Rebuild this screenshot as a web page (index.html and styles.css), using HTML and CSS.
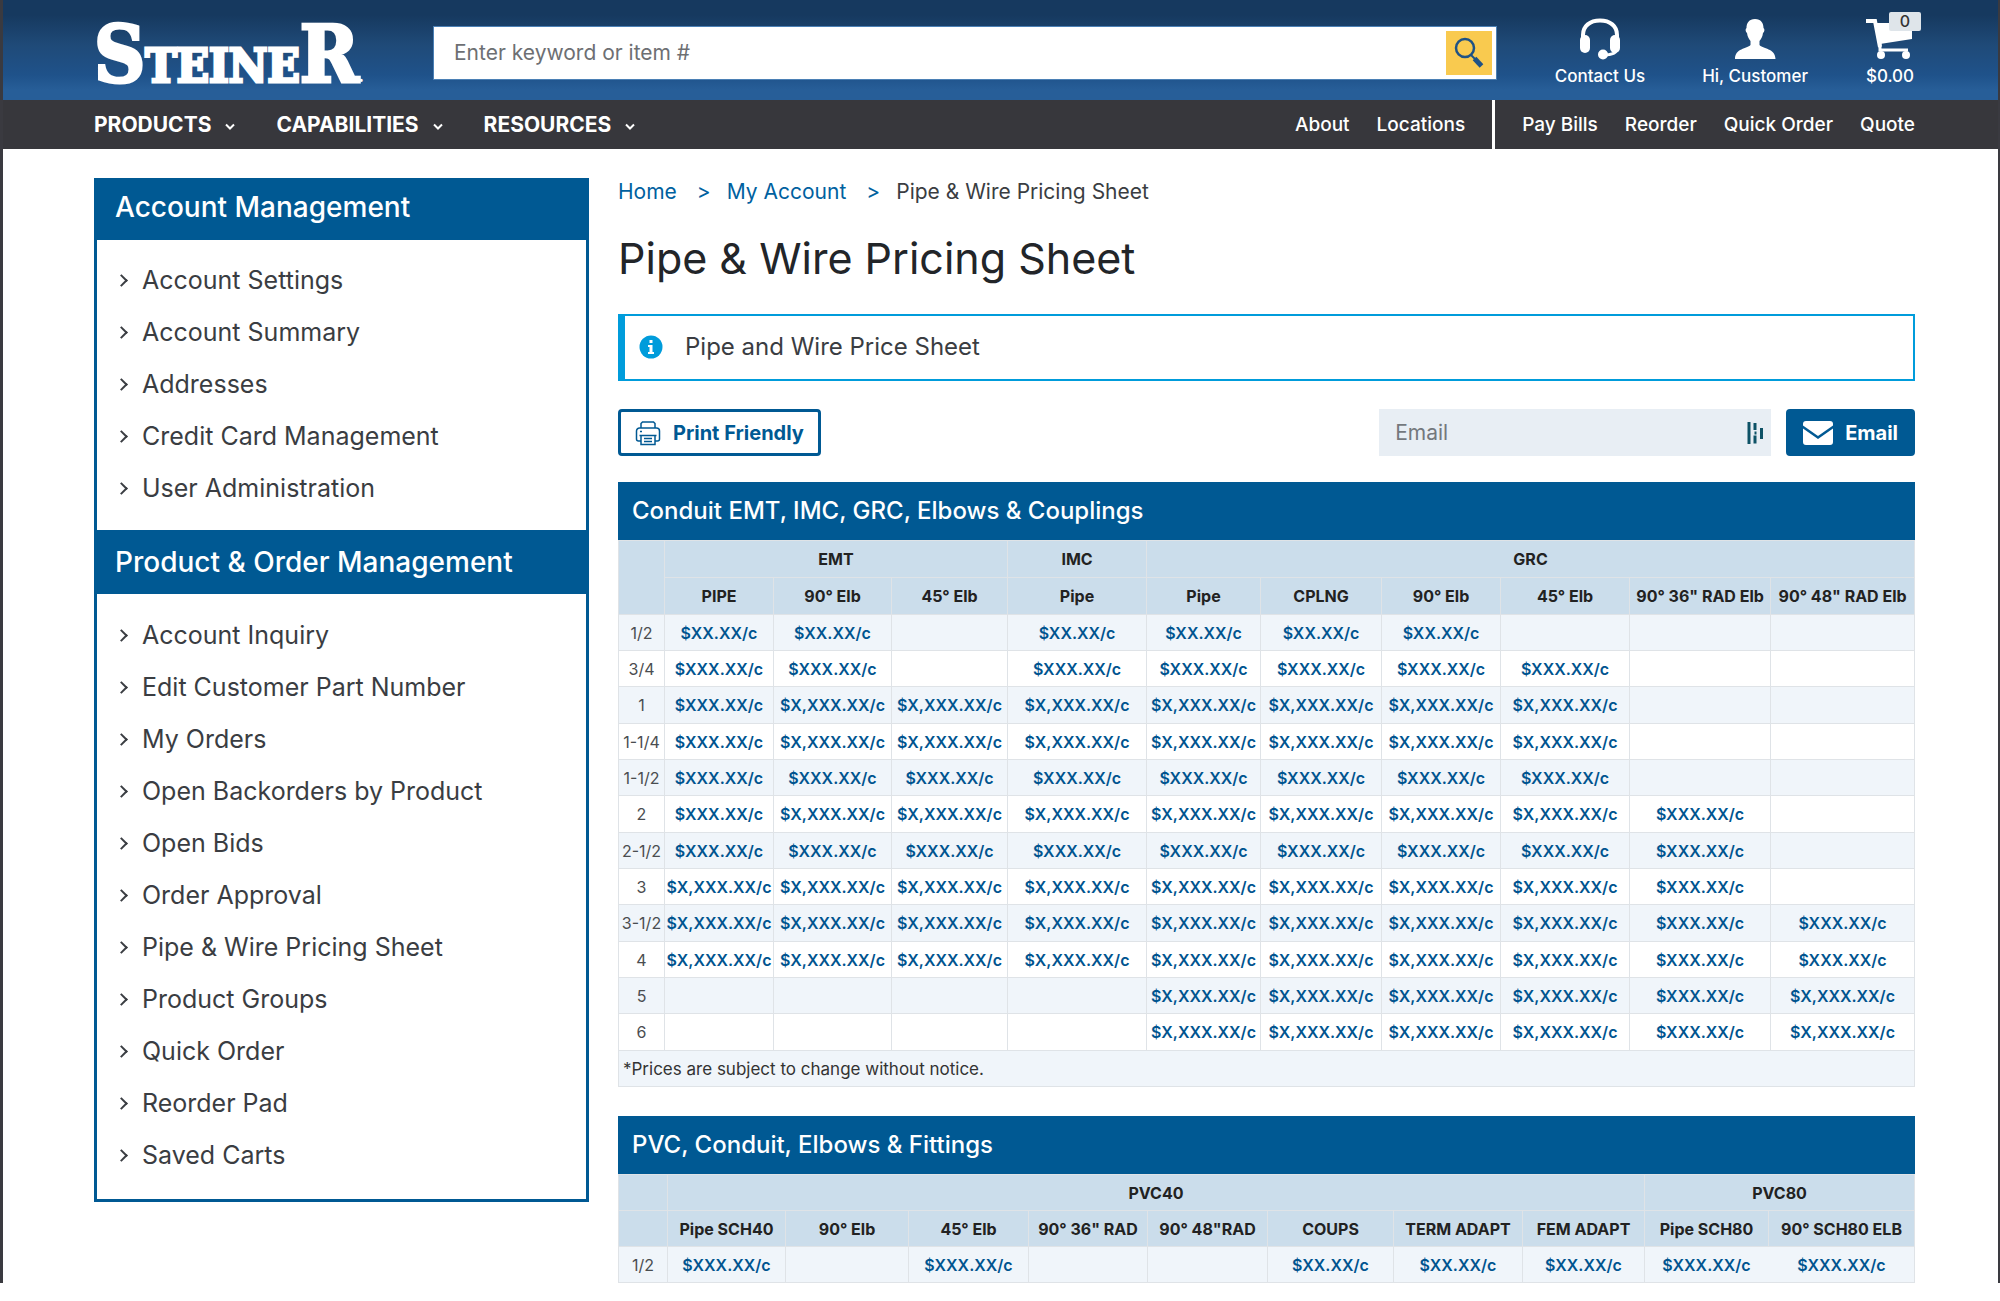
FILE: index.html
```html
<!DOCTYPE html>
<html lang="en">
<head>
<meta charset="utf-8">
<meta name="viewport" content="width=device-width, initial-scale=1">
<title>Pipe &amp; Wire Pricing Sheet</title>
<link rel="stylesheet" href="styles.css">
</head>
<body>
<div class="page">
  <header class="header wrap">
    <a class="logo" href="#" aria-label="Steiner"><span class="logo-cap">S</span>TEINE<span class="logo-cap">R</span><span class="logo-dot">.</span></a>
    <form class="search">
      <input class="search-input" type="text" aria-label="Search" placeholder="Enter keyword or item #">
      <button class="search-button" type="button" aria-label="Search">
        <svg width="30" height="34" viewBox="0 0 30 34" fill="none" stroke="#1f5285"><circle cx="11" cy="12" r="9" stroke-width="2.5"/><path d="M17 19l4 4" stroke-width="2"/><path d="M20.500 22.500l7 7.500" stroke-width="5"/></svg>
      </button>
    </form>
    <nav class="tools" aria-label="Account">
      <a class="tool" href="#">
        <svg width="42" height="42" viewBox="0 0 42 42"><path d="M4 22V17C4 8 11 2.500 21 2.500S38 8 38 17v5" fill="none" stroke="#fff" stroke-width="4"/><rect x="1" y="17" width="10" height="18" rx="5" fill="#fff"/><rect x="31" y="17" width="10" height="18" rx="5" fill="#fff"/><path d="M38 30c0 5-5 7-14 7" fill="none" stroke="#fff" stroke-width="3"/><circle cx="24" cy="36.500" r="5" fill="#fff"/></svg>
        <span>Contact Us</span>
      </a>
      <a class="tool" href="#">
        <svg width="42" height="42" viewBox="0 0 42 42" fill="#fff"><path d="M21 1c6 0 8.500 4 8.500 9 1.500 1 1 4-.5 5-.5 4-2 6-3.500 8v4c3 4 16 3 16 14H1C1 30 13 31 16.500 27v-4c-1.500-2-3-4-3.500-8-1.500-1-2-4-.5-5C12.500 5 15 1 21 1z"/></svg>
        <span>Hi, Customer</span>
      </a>
      <a class="tool" href="#">
        <span class="cart">
          <svg width="50" height="42" viewBox="0 0 50 42"><path d="M1 3h9l5 26" fill="none" stroke="#fff" stroke-width="4"/><path d="M10 5h37v16l-32 5z" fill="#fff"/><path d="M15 25v7h28" fill="none" stroke="#fff" stroke-width="3"/><circle cx="16" cy="37" r="4" fill="#fff"/><circle cx="41" cy="37" r="4" fill="#fff"/></svg>
          <span class="badge">0</span>
        </span>
        <span>$0.00</span>
      </a>
    </nav>
  </header>

  <nav class="nav wrap" aria-label="Main">
    <ul class="nav-main">
      <li><a href="#">PRODUCTS<svg width="10" height="8" viewBox="0 0 10 8"><path d="M1 1.500l4 4 4-4"/></svg></a></li>
      <li><a href="#">CAPABILITIES<svg width="10" height="8" viewBox="0 0 10 8"><path d="M1 1.500l4 4 4-4"/></svg></a></li>
      <li><a href="#">RESOURCES<svg width="10" height="8" viewBox="0 0 10 8"><path d="M1 1.500l4 4 4-4"/></svg></a></li>
    </ul>
    <div class="nav-side">
      <ul class="nav-links"><li><a href="#">About</a></li><li><a href="#">Locations</a></li></ul>
      <ul class="nav-links nav-account"><li><a href="#">Pay Bills</a></li><li><a href="#">Reorder</a></li><li><a href="#">Quick Order</a></li><li><a href="#">Quote</a></li></ul>
    </div>
  </nav>

  <div class="content wrap">
    <aside class="sidebar">
      <h2 class="sidebar-title">Account Management</h2>
      <ul class="menu">
        <li><a href="#">Account Settings</a></li>
        <li><a href="#">Account Summary</a></li>
        <li><a href="#">Addresses</a></li>
        <li><a href="#">Credit Card Management</a></li>
        <li><a href="#">User Administration</a></li>
      </ul>
      <h2 class="sidebar-title">Product &amp; Order Management</h2>
      <ul class="menu">
        <li><a href="#">Account Inquiry</a></li>
        <li><a href="#">Edit Customer Part Number</a></li>
        <li><a href="#">My Orders</a></li>
        <li><a href="#">Open Backorders by Product</a></li>
        <li><a href="#">Open Bids</a></li>
        <li><a href="#">Order Approval</a></li>
        <li><a href="#">Pipe &amp; Wire Pricing Sheet</a></li>
        <li><a href="#">Product Groups</a></li>
        <li><a href="#">Quick Order</a></li>
        <li><a href="#">Reorder Pad</a></li>
        <li><a href="#">Saved Carts</a></li>
      </ul>
    </aside>

    <main class="main">
      <nav class="crumbs" aria-label="Breadcrumb"><a href="#">Home</a><span class="sep">&gt;</span><a href="#">My Account</a><span class="sep">&gt;</span><span>Pipe &amp; Wire Pricing Sheet</span></nav>
      <h1 class="title">Pipe &amp; Wire Pricing Sheet</h1>
      <div class="notice">
        <svg width="24" height="24" viewBox="0 0 24 24"><circle cx="12" cy="12" r="11.500" fill="#009cdb"/><path d="M10.500 5h3v3h-3zM9 10h4.500v7H15v2H9v-2h1.500v-5H9z" fill="#fff"/></svg>
        <p>Pipe and Wire Price Sheet</p>
      </div>
      <div class="actions">
        <button class="button button-outline" type="button">
          <svg width="26" height="26" viewBox="0 0 26 26" fill="none" stroke="#005993" stroke-width="1.500"><path d="M6 8V3.500L7.500 2h11L20 3.500V8"/><path d="M6 21H3.500A2 2 0 0 1 1.500 19V11a3 3 0 0 1 3-3h17a3 3 0 0 1 3 3v8a2 2 0 0 1-2 2H20"/><path d="M6 24.500v-9h14v9zM4.500 15.500h17M9 18.500h8M9 21.500h8M5 11.500h2"/></svg>
          Print Friendly
        </button>
        <form class="email-form">
          <div class="field">
            <input type="email" aria-label="Email" placeholder="Email">
            <svg width="17" height="24" viewBox="0 0 17 24" fill="none" stroke="#0e5266" stroke-width="3"><path d="M2 1v22M8 2v7M8 14.500v8M14.500 7v11"/><path d="M8.500 10.500v3" stroke-width="2"/></svg>
          </div>
          <button class="button button-solid" type="button">
            <svg width="30" height="24" viewBox="0 0 30 24" fill="#fff"><path d="M3 0h24a3 3 0 0 1 3 3v1.500L15 15 0 4.500V3a3 3 0 0 1 3-3z"/><path d="M0 7.500L15 18 30 7.500V21a3 3 0 0 1-3 3H3a3 3 0 0 1-3-3z"/></svg>
            Email
          </button>
        </form>
      </div>

      <section class="sheet">
        <h2 class="sheet-title">Conduit EMT, IMC, GRC, Elbows &amp; Couplings</h2>
        <table class="prices conduit">
          <colgroup><col class="w46"><col class="w109"><col class="w118"><col class="w116"><col class="w139"><col class="w114"><col class="w121"><col class="w119"><col class="w129"><col class="w141"><col class="w144"></colgroup>
          <thead>
            <tr><td rowspan="2"></td><th colspan="3">EMT</th><th>IMC</th><th colspan="6">GRC</th></tr>
            <tr><th>PIPE</th><th>90° Elb</th><th>45° Elb</th><th>Pipe</th><th>Pipe</th><th>CPLNG</th><th>90° Elb</th><th>45° Elb</th><th>90° 36" RAD Elb</th><th>90° 48" RAD Elb</th></tr>
          </thead>
          <tbody>
            <tr><th>1/2</th><td>$XX.XX/c</td><td>$XX.XX/c</td><td></td><td>$XX.XX/c</td><td>$XX.XX/c</td><td>$XX.XX/c</td><td>$XX.XX/c</td><td></td><td></td><td></td></tr>
            <tr><th>3/4</th><td>$XXX.XX/c</td><td>$XXX.XX/c</td><td></td><td>$XXX.XX/c</td><td>$XXX.XX/c</td><td>$XXX.XX/c</td><td>$XXX.XX/c</td><td>$XXX.XX/c</td><td></td><td></td></tr>
            <tr><th>1</th><td>$XXX.XX/c</td><td>$X,XXX.XX/c</td><td>$X,XXX.XX/c</td><td>$X,XXX.XX/c</td><td>$X,XXX.XX/c</td><td>$X,XXX.XX/c</td><td>$X,XXX.XX/c</td><td>$X,XXX.XX/c</td><td></td><td></td></tr>
            <tr><th>1-1/4</th><td>$XXX.XX/c</td><td>$X,XXX.XX/c</td><td>$X,XXX.XX/c</td><td>$X,XXX.XX/c</td><td>$X,XXX.XX/c</td><td>$X,XXX.XX/c</td><td>$X,XXX.XX/c</td><td>$X,XXX.XX/c</td><td></td><td></td></tr>
            <tr><th>1-1/2</th><td>$XXX.XX/c</td><td>$XXX.XX/c</td><td>$XXX.XX/c</td><td>$XXX.XX/c</td><td>$XXX.XX/c</td><td>$XXX.XX/c</td><td>$XXX.XX/c</td><td>$XXX.XX/c</td><td></td><td></td></tr>
            <tr><th>2</th><td>$XXX.XX/c</td><td>$X,XXX.XX/c</td><td>$X,XXX.XX/c</td><td>$X,XXX.XX/c</td><td>$X,XXX.XX/c</td><td>$X,XXX.XX/c</td><td>$X,XXX.XX/c</td><td>$X,XXX.XX/c</td><td>$XXX.XX/c</td><td></td></tr>
            <tr><th>2-1/2</th><td>$XXX.XX/c</td><td>$XXX.XX/c</td><td>$XXX.XX/c</td><td>$XXX.XX/c</td><td>$XXX.XX/c</td><td>$XXX.XX/c</td><td>$XXX.XX/c</td><td>$XXX.XX/c</td><td>$XXX.XX/c</td><td></td></tr>
            <tr><th>3</th><td>$X,XXX.XX/c</td><td>$X,XXX.XX/c</td><td>$X,XXX.XX/c</td><td>$X,XXX.XX/c</td><td>$X,XXX.XX/c</td><td>$X,XXX.XX/c</td><td>$X,XXX.XX/c</td><td>$X,XXX.XX/c</td><td>$XXX.XX/c</td><td></td></tr>
            <tr><th>3-1/2</th><td>$X,XXX.XX/c</td><td>$X,XXX.XX/c</td><td>$X,XXX.XX/c</td><td>$X,XXX.XX/c</td><td>$X,XXX.XX/c</td><td>$X,XXX.XX/c</td><td>$X,XXX.XX/c</td><td>$X,XXX.XX/c</td><td>$XXX.XX/c</td><td>$XXX.XX/c</td></tr>
            <tr><th>4</th><td>$X,XXX.XX/c</td><td>$X,XXX.XX/c</td><td>$X,XXX.XX/c</td><td>$X,XXX.XX/c</td><td>$X,XXX.XX/c</td><td>$X,XXX.XX/c</td><td>$X,XXX.XX/c</td><td>$X,XXX.XX/c</td><td>$XXX.XX/c</td><td>$XXX.XX/c</td></tr>
            <tr><th>5</th><td></td><td></td><td></td><td></td><td>$X,XXX.XX/c</td><td>$X,XXX.XX/c</td><td>$X,XXX.XX/c</td><td>$X,XXX.XX/c</td><td>$XXX.XX/c</td><td>$X,XXX.XX/c</td></tr>
            <tr><th>6</th><td></td><td></td><td></td><td></td><td>$X,XXX.XX/c</td><td>$X,XXX.XX/c</td><td>$X,XXX.XX/c</td><td>$X,XXX.XX/c</td><td>$XXX.XX/c</td><td>$X,XXX.XX/c</td></tr>
          </tbody>
          <tfoot>
            <tr><td colspan="11">*Prices are subject to change without notice.</td></tr>
          </tfoot>
        </table>
      </section>

      <section class="sheet">
        <h2 class="sheet-title">PVC, Conduit, Elbows &amp; Fittings</h2>
        <table class="prices">
          <colgroup><col class="w49"><col class="w118"><col class="w123"><col class="w120"><col class="w119"><col class="w120"><col class="w126"><col class="w129"><col class="w122"><col class="w124"><col class="w146"></colgroup>
          <thead>
            <tr><td></td><th colspan="8">PVC40</th><th colspan="2">PVC80</th></tr>
            <tr><td></td><th>Pipe SCH40</th><th>90° Elb</th><th>45° Elb</th><th>90° 36" RAD</th><th>90° 48"RAD</th><th>COUPS</th><th>TERM ADAPT</th><th>FEM ADAPT</th><th>Pipe SCH80</th><th>90° SCH80 ELB</th></tr>
          </thead>
          <tbody>
            <tr><th>1/2</th><td>$XXX.XX/c</td><td></td><td>$XXX.XX/c</td><td></td><td></td><td>$XX.XX/c</td><td>$XX.XX/c</td><td>$XX.XX/c</td><td class="open">$XXX.XX/c</td><td>$XXX.XX/c</td></tr>
          </tbody>
        </table>
      </section>
    </main>
  </div>
</div>
</body>
</html>
```

FILE: styles.css
```css
* { box-sizing: border-box; }
body { margin: 0; background: #fff; color: #3a3d42; font-family: Inter, "Liberation Sans", sans-serif; }
a { color: inherit; text-decoration: none; }
ul { list-style: none; margin: 0; padding: 0; }
h1, h2, p { margin: 0; }
button, input { font: inherit; }
svg { display: block; flex: none; }

.page { border-left: 3px solid #3a3a40; border-right: 2px solid #3a3a40; }
.wrap { padding-left: 91px; padding-right: 83px; }

.header { display: flex; align-items: center; height: 100px; background: linear-gradient(#16395f 15%, #1f4a78 45%, #1f528a 75%, #275e98 90%); color: #fff; }
.logo { display: block; width: 272px; flex: none; padding-top: 32px; line-height: 60px; font-family: "DejaVu Serif Condensed", "DejaVu Serif", serif; font-weight: 700; font-size: 47px; white-space: nowrap; -webkit-text-stroke: 3px #fff; }
.logo-cap { font-size: 79px; }
.logo-dot { font-size: 16px; -webkit-text-stroke: 0; }
.search { display: flex; flex: 1; height: 54px; margin: 5px 0 0 67px; padding: 4px; background: #fff; border: 1px solid #4b80b5; }
.search-input { flex: 1; min-width: 0; border: 0; padding: 0 16px; font-size: 21px; background: #fff; color: #3a3d42; }
.search-input::placeholder { color: #6d6f73; opacity: 1; }
.search-button { width: 46px; border: 0; padding: 0; background: #f9ca4f; display: flex; align-items: center; justify-content: center; }
.tools { display: flex; gap: 57px; margin-left: 58px; padding-top: 4px; }
.tool { display: flex; flex-direction: column; align-items: center; gap: 6px; font-size: 17px; line-height: 20px; font-weight: 500; }
.cart { position: relative; }
.badge { position: absolute; top: -6px; right: -6px; width: 32px; height: 19px; border-radius: 2px; background: #dfe5ea; color: #333; font-size: 16px; line-height: 19px; text-align: center; }

.nav { display: flex; justify-content: space-between; height: 49px; background: #37373c; color: #fff; }
.nav-main { display: flex; align-items: center; gap: 41px; font-size: 21px; font-weight: 700; }
.nav-main a { display: flex; align-items: center; gap: 14px; }
.nav-main svg { margin-top: 5px; fill: none; stroke: #fff; stroke-width: 2; }
.nav-side { display: flex; }
.nav-links { display: flex; align-items: center; gap: 27px; padding-right: 27px; font-size: 19px; font-weight: 500; }
.nav-account { padding: 0 0 0 27px; border-left: 3px solid #fff; }

.content { display: flex; align-items: flex-start; gap: 29px; padding-top: 29px; }
.sidebar { flex: 0 0 495px; border: 3px solid #005993; border-top: 0; }
.sidebar-title { padding: 1px 18px 5px; line-height: 56px; background: #005993; color: #fff; font-size: 28px; font-weight: 500; }
.menu { padding: 14px 20px 16px; font-size: 25px; line-height: 52px; }
.menu + .sidebar-title { padding: 4px 18px; }
.menu + .sidebar-title + .menu { padding: 15px 20px 18px; }
.menu a { display: flex; align-items: center; gap: 16px; }
.menu a::before { content: ""; width: 7px; height: 7px; border: solid #3a3d42; border-width: 2px 2px 0 0; transform: rotate(45deg); }

.main { flex: 1; min-width: 0; }
.crumbs { display: flex; font-size: 21px; line-height: 28px; }
.crumbs a, .sep { color: #00619f; }
.sep { padding: 0 16px 0 20px; }
.title { margin-top: 24px; line-height: 56px; font-size: 43px; font-weight: 400; color: #222529; }
.notice { display: flex; align-items: center; gap: 22px; margin-top: 28px; padding: 14px 19px 15px 14px; border: 2px solid #009cdb; border-left-width: 7px; font-size: 24px; line-height: 34px; }
.actions { display: flex; justify-content: space-between; margin-top: 28px; }
.email-form { display: flex; gap: 15px; }
.button { display: flex; align-items: center; gap: 12px; height: 47px; border: 3px solid #005993; border-radius: 4px; padding: 0 14px; font-size: 20px; font-weight: 700; }
.button-outline { background: #fff; color: #005993; }
.button-solid { background: #005993; color: #fff; }
.field { display: flex; align-items: center; width: 392px; padding: 0 7px 0 16px; background: #e8eef4; }
.field input { flex: 1; min-width: 0; border: 0; padding: 0; background: none; font-size: 21px; }
.field input::placeholder { color: #74787d; opacity: 1; }

.sheet { margin-top: 26px; }
.sheet + .sheet { margin-top: 29px; }
.sheet-title { padding: 0 14px; line-height: 58px; background: #005993; color: #fff; font-size: 24px; font-weight: 500; }
.prices { width: 100%; table-layout: fixed; border-collapse: collapse; text-align: center; font-size: 16px; line-height: 20px; }
.prices th, .prices td { height: 36px; padding: 0; border: 1px solid #dfe3e7; white-space: nowrap; }
.prices thead { background: #cbddeb; color: #222; }
.prices thead th { font-weight: 700; }
.conduit thead td, .conduit thead th { height: 37px; }
.prices tbody th { font-weight: 400; color: #4a4d50; }
.prices tbody td { font-weight: 600; color: #00548f; }
.prices tbody tr:nth-child(odd), .prices tfoot { background: #f0f5fa; }
.prices tbody tr:nth-child(3n) > * { height: 37px; }
.prices tfoot td { padding-left: 4px; text-align: left; color: #333; font-size: 17px; }
.prices .open { border-right-color: transparent; }
.prices .open + td { border-left-color: transparent; }

.w46 { width: 46px; }
.w49 { width: 49px; }
.w109 { width: 109px; }
.w114 { width: 114px; }
.w116 { width: 116px; }
.w118 { width: 118px; }
.w119 { width: 119px; }
.w120 { width: 120px; }
.w121 { width: 121px; }
.w122 { width: 122px; }
.w123 { width: 123px; }
.w124 { width: 124px; }
.w126 { width: 126px; }
.w129 { width: 129px; }
.w139 { width: 139px; }
.w141 { width: 141px; }
.w144 { width: 144px; }
.w146 { width: 146px; }
```
